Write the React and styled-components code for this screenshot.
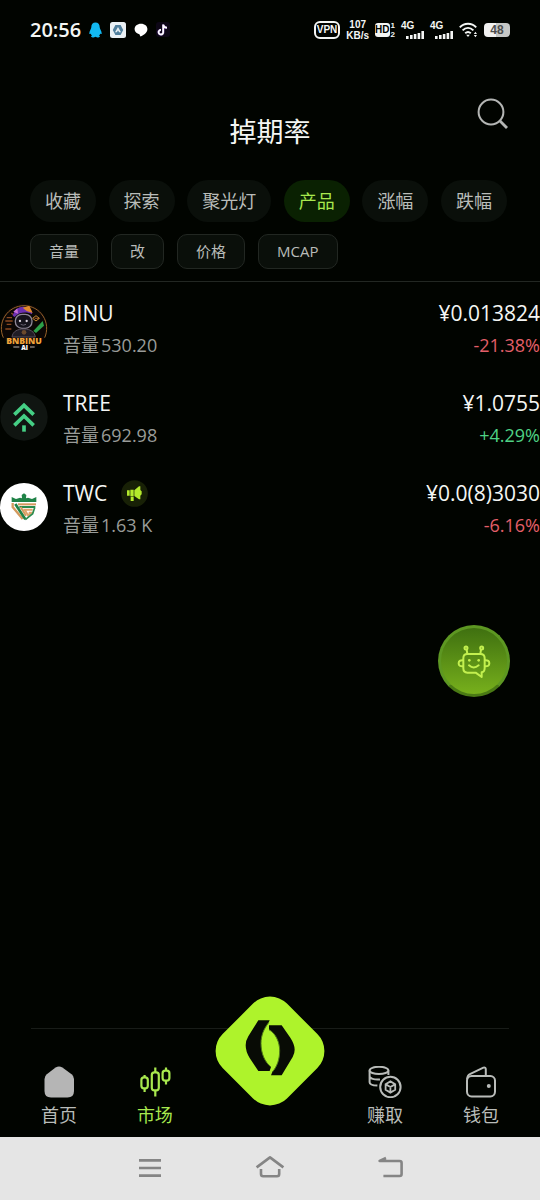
import React, { useState } from "react";
import styled, { createGlobalStyle } from "styled-components";

const colors = {
   bg: "#010400",
   text: "#f4f6f4",
   muted: "#999c99",
   label: "#b9bcb9",
   chip: "#0a0f0a",
   border: "#222722",
   accent: "#b2f32c",
   accentText: "#a8e84e",
   up: "#4fd285",
   down: "#e35f69",
};

const categories = ["收藏", "探索", "聚光灯", "产品", "涨幅", "跌幅"];
const sorts = ["音量", "改", "价格", "MCAP"];

const App = () => {
   const [category, setCategory] = useState("产品");

   return (
      <Screen>
         <GlobalStyle />
         <StatusBar />

         <Header>
            <Title>掉期率</Title>
            <SearchButton type="button" aria-label="搜索">
               <svg width="32" height="32" viewBox="0 0 32 32" fill="none" stroke="#b4b6b4">
                  <circle cx="14" cy="14" r="12.4" strokeWidth="2" />
                  <path d="M22.8 22.8L30 30" strokeWidth="2.8" />
               </svg>
            </SearchButton>
         </Header>

         <Categories>
            {categories.map((item) => (
               <Category key={item} type="button" $active={item === category} onClick={() => setCategory(item)}>
                  {item}
               </Category>
            ))}
         </Categories>

         <Sorts>
            {sorts.map((item) => (
               <Sort key={item} type="button">
                  {item}
               </Sort>
            ))}
         </Sorts>

         <TokenList>
            <Token icon={<BinuIcon />} name="BINU" volume="530.20" price="¥0.013824" change="-21.38%" />
            <Token icon={<TreeIcon />} name="TREE" volume="692.98" price="¥1.0755" change="+4.29%" />
            <Token icon={<TwcIcon />} name="TWC" volume="1.63 K" price="¥0.0(8)3030" change="-6.16%" promoted />
         </TokenList>

         <BotButton type="button" aria-label="助手">
            <BotIcon />
         </BotButton>

         <BottomNav />
         <SystemNav />
      </Screen>
   );
};

export default App;

const Token = ({ icon, name, volume, price, change, promoted }) => (
   <TokenRow>
      <TokenIcon>{icon}</TokenIcon>
      <TokenInfo>
         <TokenName>
            {name}
            {promoted && <PromoIcon />}
         </TokenName>
         <TokenMeta>
            <span>音量</span>
            <span>{volume}</span>
         </TokenMeta>
      </TokenInfo>
      <TokenPrices>
         <TokenName>{price}</TokenName>
         <Change $up={change.startsWith("+")}>{change}</Change>
      </TokenPrices>
   </TokenRow>
);

const Signal = () => (
   <SignalWrapper>
      <SmallText>4G</SmallText>
      <svg width="18" height="8" viewBox="0 0 18 8" fill="#f4f6f4">
         <rect x="0" y="5" width="2.6" height="3" />
         <rect x="4" y="4" width="2.6" height="4" />
         <rect x="7.8" y="3" width="2.6" height="5" />
         <rect x="11.6" y="2" width="2.6" height="6" />
         <rect x="15.4" y="0" width="2.6" height="8" />
      </svg>
   </SignalWrapper>
);

const StatusBar = () => (
   <StatusRow>
      <StatusGroup>
         <Time>20:56</Time>
         <svg width="13" height="16" viewBox="0 0 13 16" fill="#12b9f2">
            <path d="M6.5 0.5C3.8 0.5 2.3 2.6 2.3 5.2C2.3 6.6 0.4 9 0.3 11.2C0.3 12.6 1.3 12 1.8 11.4C1.9 12.4 2.4 13 3 13.6C1.6 14.2 1.8 15.4 3.6 15.4C5 15.4 5.8 15.2 6.5 14.7C7.2 15.2 8 15.4 9.4 15.4C11.2 15.4 11.4 14.2 10 13.6C10.6 13 11.1 12.4 11.2 11.4C11.7 12 12.7 12.6 12.7 11.2C12.6 9 10.7 6.6 10.7 5.2C10.7 2.6 9.2 0.5 6.5 0.5Z" />
         </svg>
         <svg width="16" height="16" viewBox="0 0 16 16">
            <rect width="16" height="16" rx="2.5" fill="#e9f0f4" />
            <path d="M5.4 3h5.2L13.2 8l-2.6 5H5.4L2.8 8z" fill="#4f7f9d" />
            <path d="M8 5L11 10.2H9.2L8 8.4L6.8 10.2H5z" fill="#e9f0f4" />
         </svg>
         <svg width="14" height="16" viewBox="0 0 14 16" fill="#fff">
            <path d="M7 1.8C3.2 1.8 0.6 4.2 0.6 7.2C0.6 9.8 2.8 11.6 5.4 12.2L6.4 14.4C8 14 13.4 11.2 13.4 7.2C13.4 4.2 10.8 1.8 7 1.8Z" />
         </svg>
         <svg width="14" height="16" viewBox="0 0 14 16" fill="none">
            <rect width="14" height="15" rx="3" fill="#0d0716" />
            <path d="M7.2 2.5V10.2A2.3 2.3 0 1 1 5 7.9M7.2 2.7C7.5 4.6 9 5.8 11 5.8" stroke="#8d6ab8" strokeWidth="2.4" />
            <path d="M7.2 2.5V10.2A2.3 2.3 0 1 1 5 7.9M7.2 2.7C7.5 4.6 9 5.8 11 5.8" stroke="#fff" strokeWidth="1.6" />
         </svg>
      </StatusGroup>

      <StatusGroup $tight>
         <Vpn>VPN</Vpn>
         <Speed>
            <span>107</span>
            <span>KB/s</span>
         </Speed>
         <HdWrapper>
            <HdBadge>HD</HdBadge>
            <HdLines>
               <span>1</span>
               <span>2</span>
            </HdLines>
         </HdWrapper>
         <Signal />
         <Signal />
         <svg width="19" height="16" viewBox="0 0 19 16" fill="none" stroke="#f4f6f4" strokeWidth="2">
            <path d="M0.8 5.4C5.4 0.6 12.6 0.6 17.2 5.4" />
            <path d="M3.6 8.4C6.8 5.2 11.2 5.2 14.4 8.4" />
            <path d="M6.2 11.2C8 9.6 10 9.6 11.8 11.2" />
            <path d="M7.2 12.8h3.6L9 15z" fill="#f4f6f4" stroke="none" />
            <path d="M14.8 12l1.6-2.2L18 12zM14.8 13l1.6 2.2L18 13z" fill="#f4f6f4" stroke="none" />
         </svg>
         <Battery>48</Battery>
      </StatusGroup>
   </StatusRow>
);

const BinuIcon = () => (
   <svg width="48" height="48" viewBox="0 0 144 144">
      <circle cx="72" cy="72" r="70" fill="#0b0705" />
      <path d="M10 104A68 68 0 1 1 134 104" fill="none" stroke="#98632a" strokeWidth="3" />
      <path d="M20 44h16M16 54h22M20 64h14M104 46h14M34 30l10 8M16 78h18" stroke="#8a4a22" strokeWidth="4" />
      <path d="M38 38C44 18 60 8 76 12C92 14 98 26 96 34C84 26 56 26 44 42Z" fill="#6b2fb0" />
      <path d="M68 14L88 8L98 30L80 24Z" fill="#e08a2c" />
      <path d="M40 26L52 16L54 32Z" fill="#c76fd8" />
      <rect x="46" y="34" width="50" height="42" rx="20" fill="#15131c" stroke="#8e8797" strokeWidth="4" />
      <circle cx="60" cy="54" r="3.5" fill="#d7d1dc" />
      <circle cx="80" cy="54" r="3.5" fill="#d7d1dc" />
      <path d="M62 64Q70 69 78 64" stroke="#8e8797" strokeWidth="2" fill="none" />
      <path d="M36 102C38 84 54 78 72 78C90 78 104 86 106 102Z" fill="#211d26" stroke="#544c59" strokeWidth="3" />
      <circle cx="72" cy="88" r="7" fill="#6c4a2c" />
      <path d="M100 84L128 54L132 68L108 90Z" fill="#2ca048" />
      <path d="M98 46l10-8 10 8-10 8z" fill="none" stroke="#c98b33" strokeWidth="3" />
      <text x="72" y="123" fontSize="26" fontWeight="800" fill="#f0a43a" textAnchor="middle">
         BNBINU
      </text>
      <text x="74" y="141" fontSize="19" fontWeight="800" fill="#fff" textAnchor="middle">
         AI
      </text>
      <path d="M40 132h18M90 132h14" stroke="#b9b4ad" strokeWidth="3" />
   </svg>
);

const TreeIcon = () => (
   <svg width="48" height="48" viewBox="0 0 144 144" fill="none">
      <circle cx="72" cy="72" r="71" fill="#101511" />
      <path d="M43 65L72 37L101 65M43 97L72 69L101 97" stroke="#45cf85" strokeWidth="11" />
      <path d="M72 97V116" stroke="#45cf85" strokeWidth="11" />
   </svg>
);

const TwcIcon = () => (
   <svg width="48" height="48" viewBox="0 0 144 144">
      <circle cx="72" cy="72" r="72" fill="#fff" />
      <path d="M35 42L48 48L60 44L66 46L65 36L72 31L79 36L78 46L84 44L96 48L109 42V57H35Z" fill="#1f8247" />
      <g fill="none" strokeWidth="6">
         <path d="M38 60V72L68 108" stroke="#d39a5e" strokeWidth="7" />
         <path d="M46 63L76 109" stroke="#1f8247" strokeWidth="8" />
         <path d="M54 64H108" stroke="#d39a5e" />
         <path d="M58 72H106" stroke="#2a8c4e" />
         <path d="M62 72L78 98" stroke="#d39a5e" />
         <path d="M98 80H74L84 97L94 89H86" stroke="#dfa36b" />
         <path d="M104 74L98 92L76 110" stroke="#2a8c4e" strokeWidth="5" />
      </g>
   </svg>
);

const PromoIcon = () => (
   <svg width="27" height="27" viewBox="0 0 81 81" fill="#b4ea2c">
      <circle cx="40.5" cy="40.5" r="40" fill="#182106" />
      <path d="M18 31H26V47H18zM28 29H38V49H28zM29 50H38V63H29zM40 31L54 19H58V30L62 34V43L58 47V58H54L40 48Z" />
   </svg>
);

const BotIcon = () => (
   <svg width="34" height="34" viewBox="0 0 102 102" fill="none" stroke="#c3f04f" strokeWidth="6">
      <circle cx="27" cy="12" r="4.5" />
      <circle cx="74" cy="12" r="4.5" />
      <path d="M29 17L31 30M72 17L70 30" />
      <path d="M31 30H70Q83 30 83 43V72Q83 84 74 85V99L56 86H31Q19 86 19 73V43Q19 30 31 30Z" strokeLinejoin="round" />
      <path d="M18 49Q5 48 5 58Q5 68 18 67M84 49Q97 48 97 58Q97 68 84 67" />
      <path d="M36 64Q50 77 65 64" strokeLinecap="round" />
      <circle cx="37" cy="49" r="4" fill="#c3f04f" stroke="none" />
      <circle cx="65" cy="49" r="4" fill="#c3f04f" stroke="none" />
   </svg>
);

const BottomNav = () => (
   <Nav>
      <NavGrid>
         <NavItem href="#home">
            <svg width="32" height="32" viewBox="0 0 32 32" fill="#b5b5b5">
               <path d="M12.6 1.6Q16 -0.8 19.4 1.6L28.6 8.2Q31 10 31 13V25Q31 31.5 24.5 31.5H8Q1.5 31.5 1.5 25V13Q1.5 10 3.8 8.2Z" />
            </svg>
            首页
         </NavItem>
         <NavItem href="#market" $active>
            <svg width="32" height="32" viewBox="0 0 32 32" fill="none" stroke="currentColor" strokeWidth="2.2">
               <rect x="2.4" y="11.4" width="6.4" height="11" rx="2.6" />
               <rect x="12.8" y="6.4" width="7" height="18" rx="2.6" />
               <rect x="23.6" y="4.6" width="6.8" height="10" rx="2.6" />
               <path d="M5.6 9v2.4M5.6 22.4V26M16.3 1.5v5M16.3 24.4V30.5M27 1.5v3M27 14.6V18.4" />
            </svg>
            市场
         </NavItem>
         <SwapButton type="button" aria-label="兑换">
            <svg width="110" height="110" viewBox="45 50 330 330">
               <rect x="73.5" y="78.5" width="273" height="273" rx="72" fill="#aef32b" transform="rotate(45 210 215)" />
               <path
                  d="M175 123H209L205 131C192 148 183 168 183 192C183 222 194 248 213 263L209 275H175L149 236Q137 217 137 198Q137 184 145 171Z"
                  fill="#080b05"
               />
               <path
                  d="M207 138H245L271 175Q284 195 284 211Q284 222 278 233L245 288H213L217 278C231 262 239 240 239 214C239 188 227 162 207 151Z"
                  fill="#080b05"
               />
               <path d="M205 131C192 148 183 168 183 192C183 222 194 248 213 263" fill="none" stroke="#4f7a18" strokeWidth="3" />
               <path d="M217 278C231 262 239 240 239 214C239 188 227 162 207 151" fill="none" stroke="#4f7a18" strokeWidth="3" />
            </svg>
         </SwapButton>
         <NavItem href="#earn">
            <svg width="34" height="32" viewBox="0 0 34 32" fill="none" stroke="currentColor" strokeWidth="2">
               <ellipse cx="11" cy="4.4" rx="9.4" ry="3.6" />
               <path d="M1.6 4.4V16.2C1.6 18 4.4 19.4 9.4 19.6M20.4 4.4V9M1.6 10.4C1.8 12.4 6 14 12 13.4" />
               <circle cx="22.4" cy="21" r="10.2" />
               <path d="M22.4 15.4L27.2 18.2V23.8L22.4 26.6L17.6 23.8V18.2ZM17.8 18.4L22.4 21L27 18.4M22.4 21V26.4" strokeWidth="1.8" />
            </svg>
            赚取
         </NavItem>
         <NavItem href="#wallet">
            <svg width="32" height="32" viewBox="0 0 32 32" fill="none" stroke="currentColor" strokeWidth="2">
               <rect x="2" y="10" width="28" height="20.4" rx="4.6" />
               <path d="M2.2 13.4Q2 9.4 5.4 7.8L18.4 1.6Q20.8 1 20.8 3.4V10" strokeLinejoin="round" />
               <circle cx="23.8" cy="20" r="2" fill="currentColor" stroke="none" />
            </svg>
            钱包
         </NavItem>
      </NavGrid>
   </Nav>
);

const SystemNav = () => (
   <SystemRow>
      <SystemButton type="button" aria-label="菜单">
         <svg width="30" height="24" viewBox="0 0 30 24" stroke="#858585" strokeWidth="2.6">
            <path d="M4 4.4H26M4 12H26M4 19.6H26" />
         </svg>
      </SystemButton>
      <SystemButton type="button" aria-label="主屏幕">
         <svg width="30" height="24" viewBox="0 0 30 24" fill="none" stroke="#858585" strokeWidth="2.6">
            <path d="M1.6 11.4L15 1.4L28.4 11.4" strokeLinejoin="round" />
            <path d="M6 13V18Q6 20.2 8.2 20.2H22Q24.2 20.2 24.2 18V13" />
         </svg>
      </SystemButton>
      <SystemButton type="button" aria-label="返回">
         <svg width="30" height="24" viewBox="0 0 30 24" fill="none" stroke="#858585" strokeWidth="2.6">
            <path d="M11 2L4.6 5H24.6Q26.6 5 26.6 7V18Q26.6 20 24.6 20H8.4" strokeLinejoin="round" />
         </svg>
      </SystemButton>
   </SystemRow>
);

const GlobalStyle = createGlobalStyle`
   * {
      box-sizing: border-box;
   }

   body {
      margin: 0;
      background: ${colors.bg};
      color: ${colors.text};
      font-family: "Open Sans", "Noto Sans CJK SC", sans-serif;
   }

   button {
      margin: 0;
      padding: 0;
      border: none;
      background: none;
      color: inherit;
      font-family: inherit;
      cursor: pointer;
   }

   svg {
      display: block;
      flex-shrink: 0;
   }
`;

const Screen = styled.div`
   display: flex;
   flex-direction: column;
   min-height: 100vh;
`;

const StatusRow = styled.div`
   display: flex;
   justify-content: space-between;
   align-items: center;
   height: 60px;
   padding: 0 30px;
`;

const StatusGroup = styled.div`
   display: flex;
   align-items: center;
   gap: ${({ $tight }) => ($tight ? "6px" : "8px")};
`;

const Time = styled.span`
   font-size: 20px;
   font-weight: 600;
   line-height: 24px;
`;

const SmallText = styled.span`
   font-family: "Liberation Sans", sans-serif;
   font-size: 10px;
   font-weight: 700;
   line-height: 10px;
`;

const Vpn = styled(SmallText)`
   padding: 0 1px;
   border: 2px solid ${colors.text};
   border-radius: 6px;
   line-height: 14px;
`;

const Speed = styled(SmallText)`
   display: flex;
   flex-direction: column;
   align-items: center;
   line-height: 11px;
`;

const HdWrapper = styled.div`
   display: flex;
   align-items: center;
   gap: 1px;
`;

const HdBadge = styled(SmallText)`
   border-radius: 3px;
   background: ${colors.text};
   color: ${colors.bg};
   line-height: 14px;
`;

const HdLines = styled(Speed)`
   font-size: 8px;
   line-height: 9px;
`;

const SignalWrapper = styled.div`
   display: flex;
   flex-direction: column;
   width: 23px;

   svg {
      align-self: flex-end;
   }
`;

const Battery = styled(SmallText)`
   width: 26px;
   border-radius: 4px;
   background: linear-gradient(90deg, #f1f2f1 48%, #c6c8c6 48%);
   color: #4c4e4c;
   font-size: 12px;
   line-height: 14px;
   text-align: center;
`;

const Header = styled.header`
   display: grid;
   grid-template-columns: 1fr auto 1fr;
   padding: 38px 31px 28px;
`;

const Title = styled.h1`
   grid-column: 2;
   margin: 14px 0 0;
   font-size: 27px;
   font-weight: 400;
   line-height: 40px;
`;

const SearchButton = styled.button`
   justify-self: end;
   align-self: start;
`;

const Categories = styled.div`
   display: flex;
   justify-content: space-between;
   padding: 0 33px 0 30px;
`;

const Category = styled.button`
   padding: 0 15px;
   border-radius: 21px;
   background: ${({ $active }) => ($active ? "#0a2102" : colors.chip)};
   color: ${({ $active }) => ($active ? colors.accentText : colors.label)};
   font-size: 18px;
   line-height: 42px;
`;

const Sorts = styled.div`
   display: flex;
   gap: 13px;
   padding: 12px 30px;
   border-bottom: 1px solid ${colors.border};
`;

const Sort = styled.button`
   padding: 0 18px;
   border: 1px solid ${colors.border};
   border-radius: 10px;
   background: ${colors.chip};
   color: ${colors.label};
   font-size: 15px;
   line-height: 33px;
`;

const TokenList = styled.ul`
   margin: 0;
   padding: 0;
   list-style: none;
`;

const TokenRow = styled.li`
   display: flex;
   gap: 15px;
   padding: 16px 0 12px;
`;

const TokenIcon = styled.div`
   padding-top: 5px;
`;

const TokenInfo = styled.div`
   display: flex;
   flex: 1;
   flex-direction: column;
   gap: 2px;
`;

const TokenPrices = styled(TokenInfo)`
   flex: none;
   align-items: flex-end;
`;

const TokenName = styled.div`
   display: flex;
   align-items: center;
   gap: 14px;
   font-size: 21px;
   line-height: 30px;
`;

const TokenMeta = styled.div`
   display: flex;
   gap: 2px;
   color: ${colors.muted};
   font-size: 18px;
   line-height: 30px;
`;

const Change = styled.div`
   color: ${({ $up }) => ($up ? colors.up : colors.down)};
   font-size: 18px;
   line-height: 30px;
`;

const BotButton = styled.button`
   display: flex;
   justify-content: center;
   align-items: center;
   align-self: flex-end;
   width: 72px;
   height: 72px;
   margin: 73px 30px 0;
   border: 3px solid #5d9722;
   border-bottom-color: #4a7a14;
   border-radius: 50%;
   background: linear-gradient(#3f7010, #77b01c);
`;

const Nav = styled.nav`
   margin-top: auto;

   &::before {
      content: "";
      display: block;
      height: 1px;
      margin: 0 31px;
      background: #181c18;
   }
`;

const NavGrid = styled.div`
   display: grid;
   grid-template-columns: 1fr 1fr 1.4fr 1fr 1fr;
   height: 108px;
   padding: 0 11px;
`;

const NavItem = styled.a`
   display: flex;
   flex-direction: column;
   align-items: center;
   gap: 5px;
   padding-top: 37px;
   color: ${({ $active }) => ($active ? colors.accentText : colors.label)};
   font-size: 18px;
   line-height: 24px;
   text-decoration: none;
`;

const SwapButton = styled.button`
   justify-self: center;
   align-self: start;
   margin-top: -33px;
`;

const SystemRow = styled.div`
   display: flex;
   justify-content: center;
   gap: 90px;
   padding: 19px 0 20px;
   background: #e5e5e5;
`;

const SystemButton = styled.button`
   height: 24px;
`;
